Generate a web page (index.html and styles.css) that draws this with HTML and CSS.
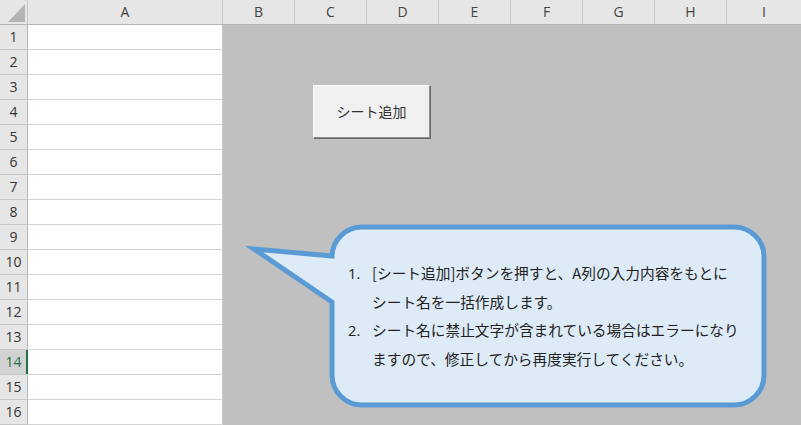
FILE: index.html
```html
<!DOCTYPE html>
<html lang="ja">
    <head>
        <meta charset="UTF-8">
        <title>シート追加</title>
        <link rel="stylesheet" href="styles.css">
    </head>
    <body>
        <div class="sheet">
            <div class="hd">
                <div class="corner">
                    <svg width="27" height="24" viewBox="0 0 27 24"><polygon points="25,4 25,22 8,22" fill="#b3b3b3"/></svg>
                </div>
                <div class="ch col-a">A</div>
                <div class="ch">B</div>
                <div class="ch">C</div>
                <div class="ch">D</div>
                <div class="ch">E</div>
                <div class="ch">F</div>
                <div class="ch">G</div>
                <div class="ch">H</div>
                <div class="ch last">I</div>
            </div>
            <div class="bd">
                <div class="rows">
                    <div class="row"><div class="rh">1</div><div class="cell"></div></div>
                    <div class="row"><div class="rh">2</div><div class="cell"></div></div>
                    <div class="row"><div class="rh">3</div><div class="cell"></div></div>
                    <div class="row"><div class="rh">4</div><div class="cell"></div></div>
                    <div class="row"><div class="rh">5</div><div class="cell"></div></div>
                    <div class="row"><div class="rh">6</div><div class="cell"></div></div>
                    <div class="row"><div class="rh">7</div><div class="cell"></div></div>
                    <div class="row"><div class="rh">8</div><div class="cell"></div></div>
                    <div class="row"><div class="rh">9</div><div class="cell"></div></div>
                    <div class="row"><div class="rh">10</div><div class="cell"></div></div>
                    <div class="row"><div class="rh">11</div><div class="cell"></div></div>
                    <div class="row"><div class="rh">12</div><div class="cell"></div></div>
                    <div class="row"><div class="rh">13</div><div class="cell"></div></div>
                    <div class="row"><div class="rh on">14</div><div class="cell"></div></div>
                    <div class="row"><div class="rh">15</div><div class="cell"></div></div>
                    <div class="row"><div class="rh">16</div><div class="cell"></div></div>
                </div>
                <div class="area">
                    <div class="btn">シート追加</div>
                    <div class="callout">
                        <svg class="bubble" width="530" height="192" viewBox="243 222 530 192">
                            <path d="M 362 227 H 734 A 30 30 0 0 1 764 257 V 375 A 30 30 0 0 1 734 405 H 362 A 30 30 0 0 1 332 375 V 302 L 254 249 L 332 256 A 30 30 0 0 1 362 227 Z"
                                  fill="#ddebf7" stroke="#5b9bd5" stroke-width="5" stroke-linejoin="miter" stroke-miterlimit="12"/>
                        </svg>
                        <ol class="notes">
                            <li>[シート追加]ボタンを押すと、A列の入力内容をもとに<br>シート名を一括作成します。</li>
                            <li>シート名に禁止文字が含まれている場合はエラーになり<br>ますので、修正してから再度実行してください。</li>
                        </ol>
                    </div>
                </div>
            </div>
        </div>
    </body>
</html>
```

FILE: styles.css
```css
body {
    margin: 0;
    background: #c0c0c0;
    font-family: "Open Sans", "Noto Sans CJK JP", sans-serif;
    color: #333;
}
.sheet {
    width: 801px;
    height: 425px;
    overflow: hidden;
}
.hd {
    display: flex;
    height: 24px;
    background: #e6e6e6;
    border-bottom: 1px solid #b5b5b5;
}
.corner {
    width: 27px;
    border-right: 1px solid #c6c6c6;
}
.corner svg {
    display: block;
}
.ch {
    width: 71px;
    border-right: 1px solid #c6c6c6;
    font-size: 14px;
    line-height: 24px;
    text-align: center;
    color: #444;
}
.ch.col-a {
    width: 194px;
}
.ch.last {
    flex: 1;
    border-right: none;
}
.bd {
    display: flex;
}
.rows {
    width: 223px;
}
.row {
    display: flex;
    height: 24px;
    border-bottom: 1px solid #d4d4d4;
}
.rh {
    width: 27px;
    background: #e6e6e6;
    border-right: 1px solid #b5b5b5;
    font-size: 14px;
    line-height: 24px;
    text-align: center;
    color: #333;
}
.row .rh {
    box-shadow: 0 1px 0 #c6c6c6;
}
.rh.on {
    background: #d2d2d2;
    color: #217346;
    border-right-color: #217346;
    box-shadow: inset -1px 0 0 #217346, 0 1px 0 #c6c6c6;
}
.cell {
    width: 194px;
    background: #fff;
    border-right: 1px solid #c6c6c6;
}
.area {
    flex: 1;
    padding-top: 60px;
}
.btn {
    width: 115px;
    height: 51px;
    margin-left: 90px;
    background: #f0f0f0;
    border: 1px solid;
    border-color: #fff #8c8c8c #8c8c8c #fff;
    box-shadow: 1px 1px 0 #6a6a6a;
    font-family: "Noto Sans CJK JP", sans-serif;
    font-size: 14px;
    line-height: 51px;
    text-align: center;
    color: #333;
}
.callout {
    position: relative;
    width: 530px;
    height: 192px;
    margin-top: 84px;
    margin-left: 20px;
}
.bubble {
    position: absolute;
    left: 0;
    top: 0;
}
.notes {
    position: relative;
    margin: 0;
    padding: 37px 0 0 105px;
    width: 400px;
    list-style: none;
    counter-reset: note;
    font-family: "Noto Sans CJK JP", sans-serif;
    font-size: 14.7px;
    line-height: 28.5px;
    color: #222;
    white-space: nowrap;
}
.notes li {
    counter-increment: note;
    padding-left: 24px;
    text-indent: -24px;
}
.notes li::before {
    content: counter(note) ".";
    display: inline-block;
    width: 24px;
    text-indent: 0;
    font-family: "Open Sans", sans-serif;
}
```
